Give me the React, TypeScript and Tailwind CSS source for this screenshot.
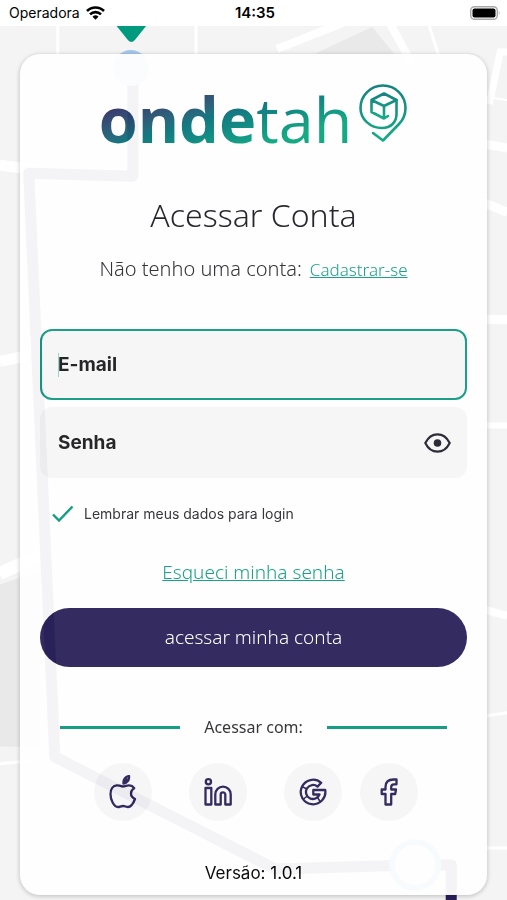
import { useState } from "react"
import type { ReactNode } from "react"

function MapBackground() {
  return (
    <svg
      aria-hidden="true"
      viewBox="0 0 507 900"
      preserveAspectRatio="xMidYMin slice"
      className="absolute inset-0 h-full w-full"
    >
      <rect width="507" height="900" fill="#f4f4f4" />
      <path d="M310 56 L372 27 L396 56 Z M0 584 L40 570 V746 H0 Z" fill="#e9e9e9" />
      <g fill="none" stroke="#fff">
        <path d="M58 25 V60 M196 25 V60" strokeWidth="3" />
        <path d="M277 49 L345 22 M388 20 L412 64" strokeWidth="8" />
        <path d="M429 26 L440 60" strokeWidth="3" />
        <path d="M507 52 H500 L489 104" strokeWidth="7" />
        <path d="M0 165 L40 170 M0 361 L40 353" strokeWidth="11" />
        <path d="M0 573 L40 555" strokeWidth="13" />
        <path d="M0 763 L40 759" strokeWidth="3" />
        <path d="M480 96 L507 100" strokeWidth="2" />
        <path d="M480 143 L507 148 M480 201 L507 212" strokeWidth="9" />
        <path d="M480 319 H507" strokeWidth="9" />
        <path d="M480 425 H507" strokeWidth="6" />
        <path d="M480 608 L507 615" strokeWidth="8" />
        <path d="M480 716 L507 712 M480 847 H507" strokeWidth="3" />
      </g>
      <path
        d="M133 68 V176 L29 173 L55 756 L275 868 L415 864 H451 V900"
        fill="none"
        stroke="#281f5b"
        strokeWidth="11"
        strokeLinejoin="round"
      />
      <circle cx="131" cy="68" r="18" fill="#a3c8ec" />
      <circle cx="415" cy="864" r="23" fill="#eef8ff" stroke="#7fb9e8" strokeWidth="6" />
      <path d="M116 25 H147 L135 40 Q131.500 44 128 40 Z" fill="#009a7e" />
    </svg>
  )
}

function StatusBar() {
  return (
    <div className="relative grid h-[26px] grid-cols-3 items-center bg-white pr-1.5 pl-[9px] text-sm text-black">
      <div className="flex items-center gap-1.5">
        <span>Operadora</span>
        <svg aria-hidden="true" width="19" height="14" viewBox="0 0 19 14">
          <g fill="none" stroke="#000" strokeWidth="2.600">
            <path d="M1 5 A12 12 0 0 1 18 5" />
            <path d="M4 8.400 A7.800 7.800 0 0 1 15 8.400" />
          </g>
          <path d="M9.500 13.800 L6.500 10.800 A4.300 4.300 0 0 1 12.500 10.800 Z" fill="#000" />
        </svg>
      </div>
      <span className="text-center text-[15px] font-semibold">14:35</span>
      <svg
        aria-hidden="true"
        width="31"
        height="14"
        viewBox="0 0 31 14"
        className="justify-self-end"
      >
        <rect x="0.700" y="0.700" width="26.600" height="12.600" rx="3.800" fill="#fff" stroke="#a8a8a8" strokeWidth="1.400" />
        <rect x="2.500" y="2.500" width="23" height="9" rx="2" fill="#000" />
        <path d="M28.800 4.800 Q30.600 7 28.800 9.200 Z" fill="#a8a8a8" />
      </svg>
    </div>
  )
}

function Logo() {
  return (
    <div className="flex items-start justify-center gap-1.5 font-['Open_Sans','Noto_Sans',sans-serif]">
      <span className="bg-linear-to-br from-[#2d2263] from-15% via-[#0a6f7b] via-45% to-[#0aa67f] to-75% bg-clip-text text-[63px] leading-[72px] text-transparent">
        <span className="font-bold">onde</span>
        <span className="font-normal">tah</span>
      </span>
      <svg aria-hidden="true" width="50" height="60" viewBox="0 0 50 60">
        <defs>
          <linearGradient id="pin" x1="0" y1="0" x2="0" y2="1">
            <stop offset="0" stopColor="#0b7d7d" />
            <stop offset="1" stopColor="#0aa880" />
          </linearGradient>
        </defs>
        <g fill="none" stroke="url(#pin)" strokeWidth="2.600" strokeLinecap="round" strokeLinejoin="round">
          <path d="M15 50 L25 57.500 L41 41 C46 36 47.500 30 47.500 25 A22.500 22.500 0 0 0 2.500 25 C2.500 36 12 45 24 45 C33 45 38.500 39 38.500 31 V17" />
          <path d="M30 33 L26 35.500 L13.500 29 V17 L26 10.500 L38.500 17 L26 23 L13.500 17 M26 23 V35.500" />
        </g>
      </svg>
    </div>
  )
}

function SocialButton({ label, children }: { label: string; children: ReactNode }) {
  return (
    <button
      type="button"
      aria-label={label}
      className="flex size-[58px] items-center justify-center rounded-full bg-[#f7f7f8]"
    >
      <svg
        aria-hidden="true"
        width="28"
        height="34"
        viewBox="0 -3 28 34"
        fill="none"
        stroke="#2a2259"
        strokeWidth="2.300"
        strokeLinejoin="round"
      >
        {children}
      </svg>
    </button>
  )
}

export default function App() {
  const [remember, setRemember] = useState(true)
  const [showPassword, setShowPassword] = useState(false)

  return (
    <div className="relative min-h-screen overflow-hidden bg-[#f4f4f4] pb-1.5 font-['Inter',sans-serif]">
      <MapBackground />
      <StatusBar />

      <main className="relative mx-5 mt-7 rounded-[20px] bg-white px-5 pt-[29px] pb-2.5 opacity-95 shadow-[0_1px_5px_rgba(0,0,0,0.25)]">
        <Logo />

        <h1 className="mt-10 text-center font-['Noto_Sans',sans-serif] text-[32px] leading-10 font-light text-[#1c1c22]">
          Acessar Conta
        </h1>
        <p className="mt-5 flex items-baseline justify-center gap-2 font-['Noto_Sans',sans-serif] leading-7 font-light text-[#2a2a30]">
          <span className="text-xl leading-7">Não tenho uma conta:</span>
          <a href="#cadastro" className="text-[17px] leading-7 text-[#0f9f82] underline">
            Cadastrar-se
          </a>
        </p>

        <form className="mt-[45px]" onSubmit={(e) => e.preventDefault()}>
          <div className="relative">
            <input
              type="email"
              aria-label="E-mail"
              placeholder="E-mail"
              className="h-[71px] w-full rounded-xl border-2 border-[#129a82] bg-[#f7f7f7] px-4 text-[19px] font-bold text-[#1c1c1f] outline-none placeholder:text-[#1c1c1f]"
            />
            <span className="absolute top-6 left-[18px] h-6 w-px bg-[#8fd6c4]" />
          </div>
          <div className="relative mt-[7px]">
            <input
              type={showPassword ? "text" : "password"}
              aria-label="Senha"
              placeholder="Senha"
              className="h-[71px] w-full rounded-xl bg-[#f7f7f7] pr-14 pl-[18px] text-[19px] font-bold text-[#1c1c1f] outline-none placeholder:text-[#1c1c1f]"
            />
            <button
              type="button"
              aria-label="Mostrar senha"
              onClick={() => setShowPassword(!showPassword)}
              className="absolute inset-y-0 right-4 flex items-center"
            >
              <svg aria-hidden="true" width="27" height="20" viewBox="0 0 27 20">
                <path
                  d="M1.300 10 C4 4.500 8.300 1.300 13.500 1.300 C18.700 1.300 23 4.500 25.700 10 C23 15.500 18.700 18.700 13.500 18.700 C8.300 18.700 4 15.500 1.300 10 Z"
                  fill="none"
                  stroke="#23222e"
                  strokeWidth="2.200"
                  strokeLinejoin="round"
                />
                <circle cx="13.500" cy="10" r="3.800" fill="#23222e" />
              </svg>
            </button>
          </div>

          <label className="mt-6 ml-3 flex h-6 w-fit items-center gap-2.5 text-sm text-[#2e2e33]">
            <span className="relative flex h-[18px] w-[22px]">
              <input
                type="checkbox"
                checked={remember}
                onChange={(e) => setRemember(e.target.checked)}
                className="peer h-full w-full appearance-none"
              />
              <svg
                aria-hidden="true"
                viewBox="0 0 22 18"
                className="pointer-events-none absolute inset-0 hidden h-full w-full peer-checked:block"
              >
                <path d="M1 9.500 L7 15.500 L20.500 1.500" fill="none" stroke="#0a9a7e" strokeWidth="2.400" />
              </svg>
            </span>
            Lembrar meus dados para login
          </label>

          <p className="mt-8 text-center font-['Noto_Sans',sans-serif] text-[19px] leading-7 font-light">
            <a href="#senha" className="text-[#0f9f82] underline">
              Esqueci minha senha
            </a>
          </p>

          <button
            type="submit"
            className="mt-[22px] h-[59px] w-full rounded-full bg-[#2a2259] font-['Noto_Sans',sans-serif] text-[19px] font-light text-white"
          >
            acessar minha conta
          </button>
        </form>

        <div className="mx-5 mt-12 flex h-6 items-center gap-6">
          <span className="h-[3px] flex-1 bg-[#0a9a7e]" />
          <span className="font-['Noto_Sans',sans-serif] text-base text-[#2e2e33]">Acessar com:</span>
          <span className="h-[3px] flex-1 bg-[#0a9a7e]" />
        </div>

        <div className="mt-6 flex justify-center gap-[37px] pl-1">
          <SocialButton label="Apple">
            <path d="M13.700 8.500 C11.500 7.800 9.800 7.200 8 7.300 C4 7.500 1.500 11 1.500 16 C1.500 22 5 29 9 29 C10.800 29 11.800 28 14 28 S17 29 19 29 C22 29 24.500 25 26 21 C23.300 19.800 22 17.800 22 15.500 C22 13.100 23.300 11.300 25.200 10.200 C24 8.300 22 7.300 19.700 7.300 C17.700 7.300 15.700 8.500 13.700 8.500 Z" />
            <path d="M14.500 5.500 C14 1.500 16.500 -1.500 20 -2 C20.500 2 18.300 5 14.500 5.500 Z M15.500 4.500 L18.500 0.500" />
          </SocialButton>
          <SocialButton label="LinkedIn">
            <circle cx="4.400" cy="3.800" r="2.600" />
            <path d="M1.500 10 H7.300 V26.500 H1.500 Z" />
            <path d="M11.300 26.500 V16.300 A7.700 7.700 0 0 1 26.700 16.300 V26.500 H21.300 V16.600 A2.300 2.300 0 0 0 16.700 16.600 V26.500 Z" />
          </SocialButton>
          <SocialButton label="Google">
            <path d="M22.200 4.800 A12.300 12.300 0 1 0 26.200 12 H14.300 V16.500 H20.500 A7 7 0 1 1 18.500 8.600 Z" />
            <path d="M3 8.500 L7.800 11 M4 21.500 L8.300 18 M21.500 24 L18.500 19.500" strokeWidth="1.600" />
          </SocialButton>
          <div className="-ml-[19px]">
            <SocialButton label="Facebook">
              <path d="M21.500 1.500 H18.500 C13.500 1.500 10.500 4.200 10.500 9 V11.500 H6.700 V16 H10.500 V26.500 H16.200 V16 H20.200 L21 11.500 H16.200 V9 C16.200 7 17 6.300 19 6.300 H21.500 Z" />
            </SocialButton>
          </div>
        </div>

        <p className="mt-10 text-center text-[17px] leading-6 text-black">Versão: 1.0.1</p>
      </main>
    </div>
  )
}
